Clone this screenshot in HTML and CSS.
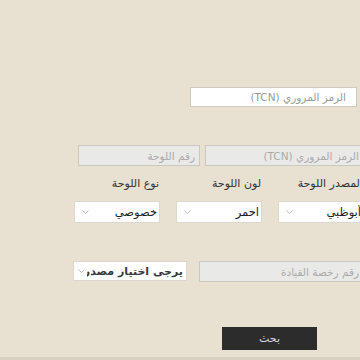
FILE: index.html
```html
<!DOCTYPE html>
<html lang="ar" dir="rtl">
<head>
<meta charset="utf-8">
<link rel="stylesheet" href="styles.css">
</head>
<body>
<div class="page">
  <div class="row row-tcn">
    <div class="field field-white tcn-top"><span class="ph">الرمز المروري (TCN)</span></div>
  </div>
  <div class="row row-disabled">
    <div class="field field-disabled tcn-dis"><span class="ph-dis">الرمز المروري (TCN)</span></div>
    <div class="field field-disabled plate-dis"><span class="ph-dis">رقم اللوحة</span></div>
  </div>
  <div class="grid3">
    <div class="col">
      <div class="label">المصدر اللوحة</div>
      <div class="select"><span class="val">أبوظبي</span><svg class="chev" width="7" height="4" viewBox="0 0 7 4"><polyline points="0.5,0.5 3.5,3.5 6.5,0.5" fill="none" stroke="#b5b5b5" stroke-width="0.9"/></svg></div>
    </div>
    <div class="col">
      <div class="label">لون اللوحة</div>
      <div class="select"><span class="val">احمر</span><svg class="chev" width="7" height="4" viewBox="0 0 7 4"><polyline points="0.5,0.5 3.5,3.5 6.5,0.5" fill="none" stroke="#b5b5b5" stroke-width="0.9"/></svg></div>
    </div>
    <div class="col">
      <div class="label">نوع اللوحة</div>
      <div class="select"><span class="val">خصوصي</span><svg class="chev" width="7" height="4" viewBox="0 0 7 4"><polyline points="0.5,0.5 3.5,3.5 6.5,0.5" fill="none" stroke="#b5b5b5" stroke-width="0.9"/></svg></div>
    </div>
  </div>
  <div class="row row-license">
    <div class="field field-disabled license"><span class="ph-dis">رقم رخصة القيادة</span></div>
    <div class="select select-src"><span class="val val-bold">يرجى اختيار مصدر الرخصة</span><svg class="chev" width="7" height="4" viewBox="0 0 7 4"><polyline points="0.5,0.5 3.5,3.5 6.5,0.5" fill="none" stroke="#b5b5b5" stroke-width="0.9"/></svg></div>
  </div>
  <div class="row row-btn">
    <button class="btn">بحث</button>
  </div>
  <div class="footer-line"></div>
</div>
</body>
</html>
```
FILE: styles.css
```css
html, body {
  margin: 0;
  padding: 0;
  background: #e8e0d0;
  overflow: hidden;
  width: 360px;
  height: 360px;
}
body {
  direction: rtl;
  font-family: "DejaVu Sans", "Noto Sans", sans-serif;
  font-size: 10.5px;
  color: #3a3a3a;
}
.page {
  margin-right: -4px;
  padding-top: 87px;
}
.row {
  display: flex;
  flex-direction: row;
}
.field {
  box-sizing: border-box;
  display: flex;
  align-items: center;
  white-space: nowrap;
  overflow: hidden;
}
.field-white {
  background: #ffffff;
  border: 1px solid #cfcac0;
  height: 20px;
  padding: 0 10px;
}
.tcn-top {
  width: 167px;
  margin-right: 7px;
}
.ph {
  color: #9a9a9a;
}
.field-disabled {
  background: #e9e9e7;
  border: 1px solid #cbc8c2;
  height: 21px;
  padding: 0 4px;
}
.ph-dis {
  color: #ababab;
}
.row-disabled {
  margin-top: 38px;
  gap: 5px;
}
.tcn-dis { width: 159px; }
.plate-dis { width: 122px; }
.grid3 {
  display: flex;
  gap: 16px;
  margin-top: 10px;
}
.col {
  width: 86px;
  display: flex;
  flex-direction: column;
}
.label {
  height: 16px;
  line-height: 16px;
  color: #333;
  font-size: 11px;
  white-space: nowrap;
  padding-right: 1px;
}
.select {
  box-sizing: border-box;
  margin-top: 9px;
  height: 22px;
  background: #ffffff;
  border: 1px solid #ddd8cf;
  display: flex;
  align-items: center;
  justify-content: space-between;
  padding: 0 2px 0 7px;
  overflow: hidden;
  white-space: nowrap;
}
.val {
  color: #222;
  font-size: 11.5px;
  overflow: hidden;
  flex: 1 1 auto;
  min-width: 0;
}
.val-bold {
  font-size: 11px;
  font-weight: bold;
  color: #3a3a3a;
}
.chev {
  flex: 0 0 auto;
  margin-right: 4px;
}
.row-license {
  margin-top: 38px;
  gap: 12px;
  align-items: flex-start;
}
.license { width: 165px; }
.select-src {
  margin-top: 0;
  width: 114px;
  height: 20px;
  padding: 0 3px 0 4px;
}
.select-src .chev {
  margin-right: 2px;
}
.row-btn {
  margin-top: 45px;
}
.btn {
  margin: 0 47px 0 0;
  width: 95px;
  height: 23px;
  border: none;
  background: #2c2c2c;
  color: #dcdcdc;
  font-family: "DejaVu Sans", sans-serif;
  font-size: 11px;
  padding: 0;
}
.footer-line {
  margin-top: 7px;
  height: 3px;
  background: #d9d1c1;
}
```
